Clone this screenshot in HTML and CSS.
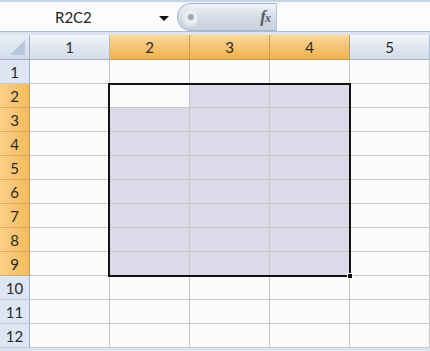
FILE: index.html
```html
<!DOCTYPE html>
<html lang="en">
<head>
    <meta charset="UTF-8">
    <title>R2C2</title>
    <link rel="stylesheet" href="styles.css">
</head>
<body>

<div class="top-strip"></div>

<div class="formula-bar">
    <div class="name-box">
        <span class="name-text">R2C2</span>
        <span class="drop-arrow"></span>
    </div>
    <div class="fx-pill">
        <span class="pill-knob"></span>
        <span class="fx">f<i>x</i></span>
    </div>
    <div class="formula-input"></div>
</div>

<div class="bar-gap"></div>

<div class="sheet">
    <div class="corner"><span class="corner-tri"></span></div>
    <div class="col-head">1</div>
    <div class="col-head on">2</div>
    <div class="col-head on">3</div>
    <div class="col-head on">4</div>
    <div class="col-head">5</div>

    <div class="row-head">1</div>
    <div class="cell"></div><div class="cell"></div><div class="cell"></div><div class="cell"></div><div class="cell"></div>

    <div class="row-head on">2</div>
    <div class="cell"></div><div class="cell active"></div><div class="cell sel"></div><div class="cell sel"></div><div class="cell"></div>

    <div class="row-head on">3</div>
    <div class="cell"></div><div class="cell sel"></div><div class="cell sel"></div><div class="cell sel"></div><div class="cell"></div>

    <div class="row-head on">4</div>
    <div class="cell"></div><div class="cell sel"></div><div class="cell sel"></div><div class="cell sel"></div><div class="cell"></div>

    <div class="row-head on">5</div>
    <div class="cell"></div><div class="cell sel"></div><div class="cell sel"></div><div class="cell sel"></div><div class="cell"></div>

    <div class="row-head on">6</div>
    <div class="cell"></div><div class="cell sel"></div><div class="cell sel"></div><div class="cell sel"></div><div class="cell"></div>

    <div class="row-head on">7</div>
    <div class="cell"></div><div class="cell sel"></div><div class="cell sel"></div><div class="cell sel"></div><div class="cell"></div>

    <div class="row-head on">8</div>
    <div class="cell"></div><div class="cell sel"></div><div class="cell sel"></div><div class="cell sel"></div><div class="cell"></div>

    <div class="row-head on">9</div>
    <div class="cell"></div><div class="cell sel"></div><div class="cell sel"></div><div class="cell sel"></div><div class="cell"></div>

    <div class="row-head">10</div>
    <div class="cell"></div><div class="cell"></div><div class="cell"></div><div class="cell"></div><div class="cell"></div>

    <div class="row-head">11</div>
    <div class="cell"></div><div class="cell"></div><div class="cell"></div><div class="cell"></div><div class="cell"></div>

    <div class="row-head">12</div>
    <div class="cell"></div><div class="cell"></div><div class="cell"></div><div class="cell"></div><div class="cell"></div>

    <div class="selection"><span class="fill-handle"></span></div>
</div>

</body>
</html>
```

FILE: styles.css
```css
* {
    box-sizing: border-box;
    margin: 0;
    padding: 0;
}

body {
    width: 430px;
    height: 351px;
    overflow: hidden;
    background-color: #dbe4f0;
    font-family: Lato, 'Open Sans', sans-serif;
    color: #222;
}

.top-strip {
    height: 3px;
    background-color: #c4d5ea;
    border-bottom: 1px solid #f4f7fb;
}

.formula-bar {
    display: flex;
    height: 29px;
    border-bottom: 1px solid #a9bcd3;
    background-color: #fbfcfd;
}

.name-box {
    width: 177px;
    display: flex;
    align-items: center;
    position: relative;
    background-color: #fbfcfd;
}

.name-text {
    margin-left: 55px;
    font-size: 15px;
    color: #1e1e1e;
}

.drop-arrow {
    position: absolute;
    left: 159px;
    top: 13px;
    width: 0;
    height: 0;
    border-left: 5px solid transparent;
    border-right: 5px solid transparent;
    border-top: 5px solid #111;
}

.fx-pill {
    width: 100px;
    display: flex;
    align-items: center;
    justify-content: flex-end;
    padding-right: 6px;
    position: relative;
    border-radius: 14px 0 0 14px;
    border: 1px solid #a7b6c9;
    border-right: 1px solid #b9c6d6;
    background: linear-gradient(#f1f4f8, #d3dbe6 55%, #c9d2de);
}

.pill-knob {
    position: absolute;
    left: 4px;
    top: 5px;
    width: 16px;
    height: 18px;
    border-radius: 50%;
    background: radial-gradient(circle at 55% 45%, #9aa3ad 0 2px, #eef1f4 4px, #dfe4ea 9px);
}

.fx {
    font-family: 'Liberation Serif', serif;
    font-style: italic;
    font-size: 17px;
    font-weight: bold;
    color: #555c66;
    letter-spacing: -1px;
}

.fx i {
    font-size: 12px;
}

.formula-input {
    flex: 1;
    background-color: #fbfcfd;
}

.bar-gap {
    height: 3px;
    background-color: #dbe4f0;
}

.sheet {
    position: relative;
    display: grid;
    grid-template-columns: 30px repeat(5, 80px);
    grid-template-rows: 25px repeat(12, 24px);
    background-color: #fbfbf9;
}

.corner {
    position: relative;
    background: linear-gradient(#e9eff7, #d2dcea);
    border-right: 1px solid #9eb3cb;
    border-bottom: 1px solid #9eb3cb;
}

.corner-tri {
    position: absolute;
    right: 4px;
    bottom: 4px;
    width: 0;
    height: 0;
    border-left: 15px solid transparent;
    border-bottom: 15px solid #b7c7dc;
}

.col-head {
    display: flex;
    align-items: center;
    justify-content: center;
    font-size: 15px;
    color: #2a2a2a;
    background: linear-gradient(#f3f6fa, #e2e8f1 45%, #d4dde9);
    border-right: 1px solid #a9bbd1;
    border-bottom: 1px solid #9eb3cb;
}

.col-head.on {
    background: linear-gradient(#f9d79f, #f5c577 45%, #f0b24c);
    border-right: 1px solid #c99a4c;
    border-bottom: 1px solid #c99a4c;
}

.row-head {
    display: flex;
    align-items: center;
    justify-content: center;
    font-size: 15px;
    color: #2a2a2a;
    background-color: #dde6f2;
    border-right: 1px solid #9eb3cb;
    border-bottom: 1px solid #b9c8da;
}

.row-head.on {
    background: linear-gradient(90deg, #f9cf8a, #f4bb5b);
    border-right: 1px solid #c99a4c;
    border-bottom: 1px solid #d9ab5c;
}

.cell {
    border-right: 1px solid #c6c6c6;
    border-bottom: 1px solid #c6c6c6;
    background-color: #fbfbf9;
}

.cell.sel {
    background-color: #dbdae8;
}

.cell.active {
    background-color: #fbfbfc;
}

.selection {
    position: absolute;
    left: 108px;
    top: 48px;
    width: 243px;
    height: 194px;
    border: 2px solid #111;
    pointer-events: none;
}

.fill-handle {
    position: absolute;
    right: -4px;
    bottom: -4px;
    width: 6px;
    height: 6px;
    background-color: #111;
    border: 1px solid #fbfbf9;
}
```
